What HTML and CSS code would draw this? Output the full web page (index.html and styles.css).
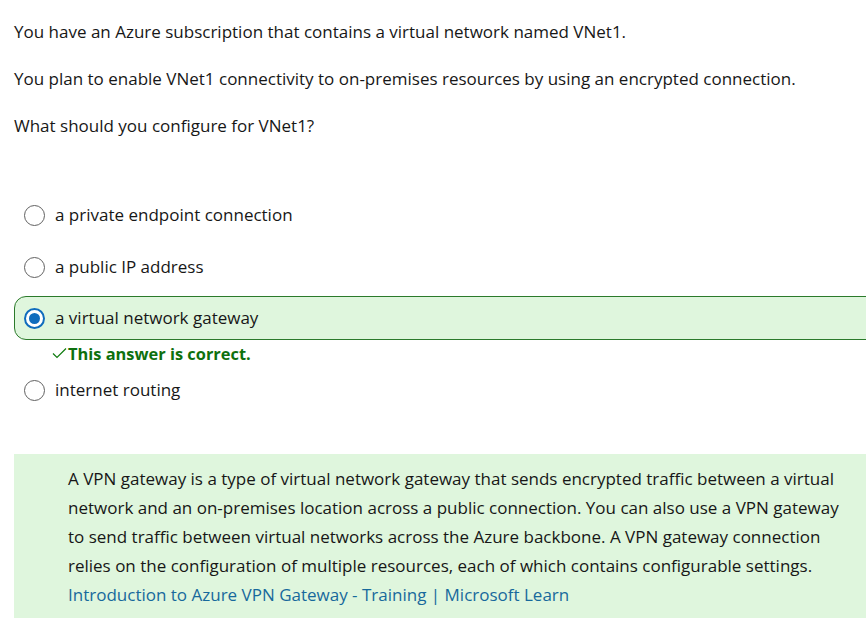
FILE: index.html
```html
<!DOCTYPE html>
<html lang="en">
<head>
<meta charset="utf-8">
<title>Question</title>
<link rel="stylesheet" href="styles.css">
</head>
<body>
<main class="page">
  <section class="question">
    <p>You have an Azure subscription that contains a virtual network named VNet1.</p>
    <p>You plan to enable VNet1 connectivity to on-premises resources by using an encrypted connection.</p>
    <p>What should you configure for VNet1?</p>
  </section>
  <section class="options">
    <div class="option"><span class="radio"></span><span class="label">a private endpoint connection</span></div>
    <div class="option"><span class="radio"></span><span class="label">a public IP address</span></div>
    <div class="option selected"><span class="radio checked"></span><span class="label">a virtual network gateway</span></div>
    <div class="feedback">
      <svg class="check" width="15" height="12" viewBox="0 0 15 12"><path d="M1 6.5 L5 10.5 L14 1.5" fill="none" stroke="#107c10" stroke-width="1.2"/></svg>
      <span>This answer is correct.</span>
    </div>
    <div class="option"><span class="radio"></span><span class="label">internet routing</span></div>
  </section>
  <section class="explanation">
    <p>A VPN gateway is a type of virtual network gateway that sends encrypted traffic between a virtual<br>network and an on-premises location across a public connection. You can also use a VPN gateway<br>to send traffic between virtual networks across the Azure backbone. A VPN gateway connection<br>relies on the configuration of multiple resources, each of which contains configurable settings.<br><a href="#">Introduction to Azure VPN Gateway - Training | Microsoft Learn</a></p>
  </section>
</main>
</body>
</html>
```
FILE: styles.css
```css
html, body {
  margin: 0;
  padding: 0;
  background: #ffffff;
  overflow: hidden;
}
body {
  font-family: "Segoe UI", "Open Sans", "Noto Sans", sans-serif;
  font-size: 17px;
  color: #171717;
}
.page {
  width: 900px;
  padding: 20px 0 0 14px;
}
.question p {
  margin: 0 0 23px 0;
  line-height: 24px;
}
.question p:last-child {
  margin-bottom: 0;
}
.options {
  margin-top: 55px;
  display: flex;
  flex-direction: column;
}
.option {
  height: 42px;
  border: 1px solid transparent;
  border-radius: 12px 0 0 12px;
  display: flex;
  align-items: center;
  padding-left: 9px;
  margin-bottom: 8px;
}
.option.selected {
  background: #dff6dd;
  border-color: #2b7a2b;
  margin-top: -1px;
  margin-bottom: 3px;
}
.radio {
  border: 1px solid #616161;
  border-radius: 50%;
  box-sizing: border-box;
  width: 21px;
  height: 21px;
  flex: none;
  background: #fff;
}
.radio.checked {
  border: 2px solid #0f6cbd;
  display: flex;
  align-items: center;
  justify-content: center;
}
.radio.checked::after {
  content: "";
  width: 11px;
  height: 11px;
  border-radius: 50%;
  background: #0f6cbd;
}
.label {
  margin-left: 10px;
  line-height: 24px;
}
.feedback {
  display: flex;
  align-items: center;
  height: 20px;
  padding-left: 38px;
  margin-bottom: 5px;
  color: #0e700e;
  font-size: 16.4px;
  font-weight: 700;
}
.check {
  margin-right: 1px;
}
.explanation {
  margin-top: 34px;
  background: #dff6dd;
  padding: 10px 0 9px 54px;
}
.explanation p {
  margin: 0;
  line-height: 29px;
}
.explanation a {
  color: #17699c;
  text-decoration: none;
}
```
